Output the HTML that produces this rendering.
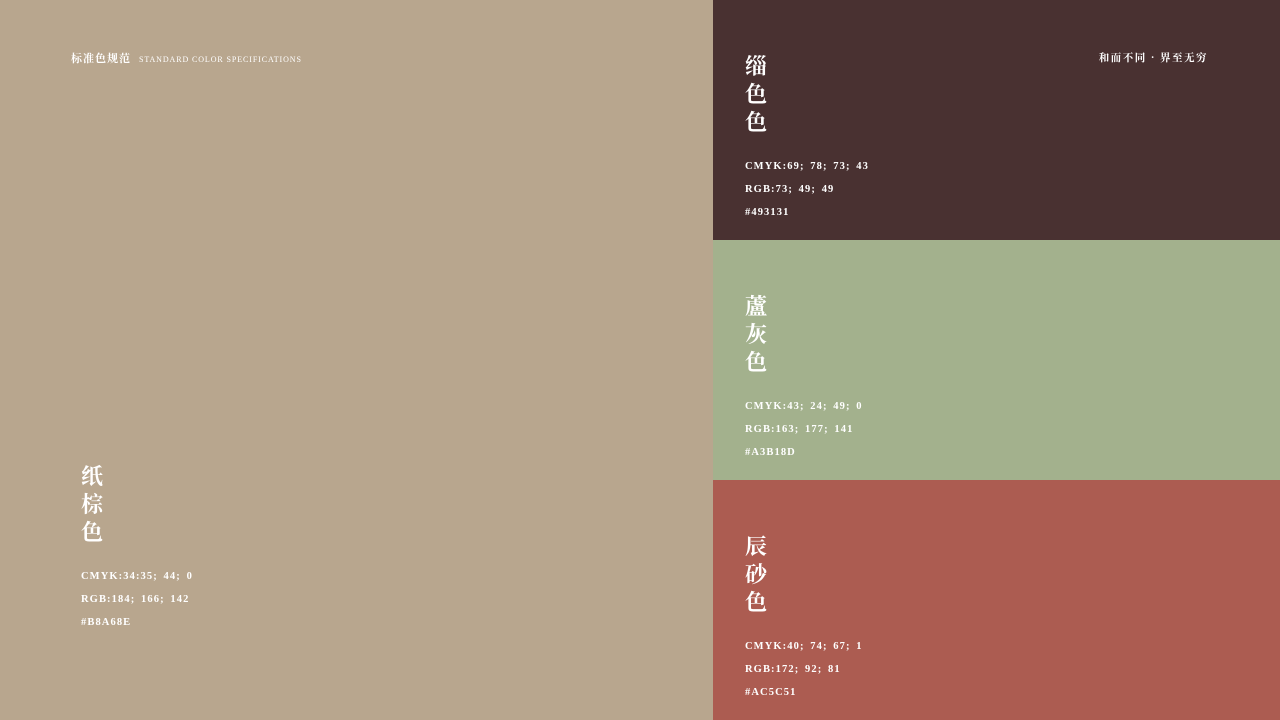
<!DOCTYPE html>
<html><head><meta charset="utf-8"><style>
*{margin:0;padding:0}
body{width:1280px;height:720px;position:relative;overflow:hidden;background:#b8a68e;font-family:"Liberation Serif","Noto Serif CJK SC",serif;color:#fff}
.p{position:absolute}
.cn{position:absolute;font-family:"Noto Serif CJK SC","Noto Sans CJK SC",serif;font-weight:bold;font-size:22px;line-height:28px;width:24px}
.sp{position:absolute;font-size:10.5px;line-height:23px;letter-spacing:1.1px;white-space:nowrap;font-weight:bold;word-spacing:2px}
</style></head><body>
<div class="p" style="left:0;top:0;width:712px;height:720px;background:#b8a68e"></div>
<div class="p" style="left:713px;top:0;width:567px;height:240px;background:#493131"></div>
<div class="p" style="left:713px;top:240px;width:567px;height:240px;background:#a3b18d"></div>
<div class="p" style="left:713px;top:480px;width:567px;height:240px;background:#ac5c51"></div>

<div class="p" style="left:71px;top:51px;font-size:11px;white-space:nowrap;line-height:14px"><span style="font-family:'Noto Serif CJK SC',serif;letter-spacing:1px;font-weight:bold">标准色规范</span><span style="font-size:8px;letter-spacing:0.9px;margin-left:8px">STANDARD COLOR SPECIFICATIONS</span></div>
<div class="p" style="right:72px;top:51px;font-size:10.5px;letter-spacing:1.5px;font-family:'Noto Serif CJK SC',serif;line-height:14px;font-weight:bold">和而不同 · 界至无穷</div>

<div class="cn" style="left:81px;top:462px">纸<br>棕<br>色</div>
<div class="sp" style="left:81px;top:565px">CMYK:34:35; 44; 0<br>RGB:184; 166; 142<br>#B8A68E</div>

<div class="cn" style="left:745px;top:52px">缁<br>色<br>色</div>
<div class="sp" style="left:745px;top:155px">CMYK:69; 78; 73; 43<br>RGB:73; 49; 49<br>#493131</div>

<div class="cn" style="left:745px;top:292px">蘆<br>灰<br>色</div>
<div class="sp" style="left:745px;top:395px">CMYK:43; 24; 49; 0<br>RGB:163; 177; 141<br>#A3B18D</div>

<div class="cn" style="left:745px;top:532px">辰<br>砂<br>色</div>
<div class="sp" style="left:745px;top:635px">CMYK:40; 74; 67; 1<br>RGB:172; 92; 81<br>#AC5C51</div>
</body></html>
